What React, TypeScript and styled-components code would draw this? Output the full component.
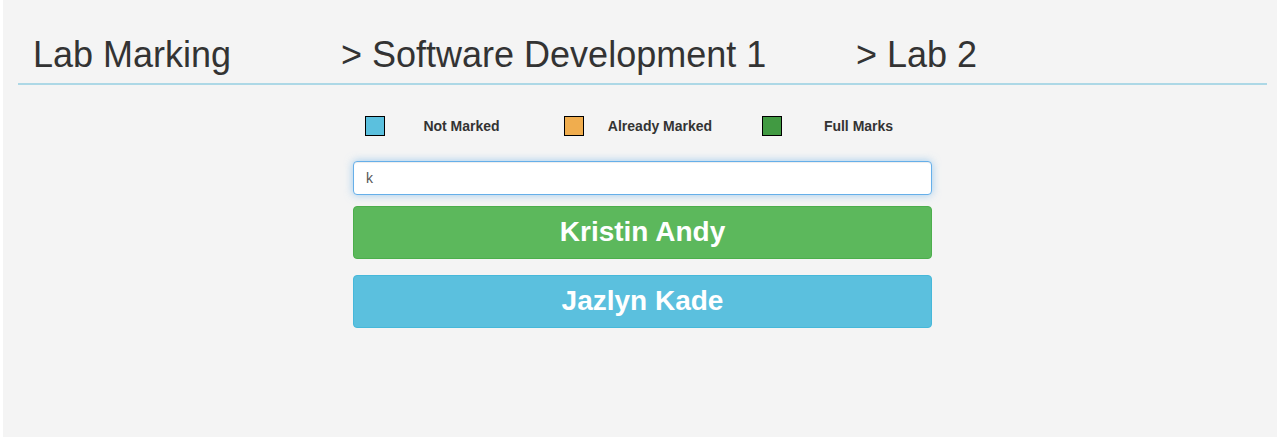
import styled, { createGlobalStyle } from "styled-components";

const GlobalStyle = createGlobalStyle`
  html, body {
    margin: 0;
    padding: 0;
    background: #ffffff;
  }
  body {
    font-family: "Liberation Sans", Arial, Helvetica, sans-serif;
    color: #333333;
  }
`;

const Page = styled.div`
  margin-left: 3px;
  min-height: 437px;
  background-color: #f4f4f4;
  display: flex;
  flex-direction: column;
`;

const Header = styled.div`
  margin: 0 10px 0 15px;
  padding: 35px 0 8px 15px;
  border-bottom: 2px solid #add8e6;
  display: grid;
  grid-template-columns: 308px 515px auto;

  > h1 {
    margin: 0;
    font-size: 36px;
    font-weight: 400;
    line-height: 40px;
    color: #333333;
  }
`;

const Main = styled.div`
  margin-left: 350px;
  width: 579px;
  display: flex;
  flex-direction: column;
`;

const Legend = styled.div`
  margin-top: 31px;
  display: grid;
  grid-template-columns: repeat(3, 198.5px);
  width: 595.5px;
`;

const LegendItem = styled.div`
  display: flex;
  align-items: center;
  padding-left: 12px;
  height: 20px;
`;

const Swatch = styled.span<{ $color: string }>`
  width: 20px;
  height: 20px;
  box-sizing: border-box;
  border: 1px solid #000000;
  background-color: ${(p) => p.$color};
`;

const LegendLabel = styled.span`
  width: 153px;
  text-align: center;
  font-size: 14px;
  font-weight: 700;
  color: #333333;
`;

const Search = styled.input`
  margin-top: 25px;
  height: 34px;
  box-sizing: border-box;
  padding: 6px 12px;
  font-family: "Liberation Sans", Arial, sans-serif;
  font-size: 14px;
  color: #555555;
  background: #ffffff;
  border: 1px solid #66afe9;
  border-radius: 4px;
  outline: none;
  box-shadow: inset 0 1px 1px rgba(0, 0, 0, 0.075),
    0 0 8px rgba(102, 175, 233, 0.6);
`;

const List = styled.div`
  margin-top: 11px;
  display: flex;
  flex-direction: column;
  gap: 16px;
`;

const StudentButton = styled.button<{ $kind: "success" | "info" }>`
  height: 53px;
  box-sizing: border-box;
  border-radius: 4px;
  border: 1px solid
    ${(p) => (p.$kind === "success" ? "#4cae4c" : "#46b8da")};
  background-color: ${(p) => (p.$kind === "success" ? "#5cb85c" : "#5bc0de")};
  color: #ffffff;
  font-family: "Liberation Sans", Arial, sans-serif;
  font-size: 28px;
  font-weight: 700;
  line-height: 1;
  padding: 0 0 2px;
  cursor: pointer;
`;

const legend = [
  { label: "Not Marked", color: "#5bc0de" },
  { label: "Already Marked", color: "#f0ad4e" },
  { label: "Full Marks", color: "#419a42" },
];

const students: { name: string; kind: "success" | "info" }[] = [
  { name: "Kristin Andy", kind: "success" },
  { name: "Jazlyn Kade", kind: "info" },
];

export default function App() {
  return (
    <>
      <GlobalStyle />
      <Page>
        <Header>
          <h1>Lab Marking</h1>
          <h1>&gt; Software Development 1</h1>
          <h1>&gt; Lab 2</h1>
        </Header>
        <Main>
          <Legend>
            {legend.map((l) => (
              <LegendItem key={l.label}>
                <Swatch $color={l.color} />
                <LegendLabel>{l.label}</LegendLabel>
              </LegendItem>
            ))}
          </Legend>
          <Search defaultValue="k" />
          <List>
            {students.map((s) => (
              <StudentButton key={s.name} $kind={s.kind}>
                {s.name}
              </StudentButton>
            ))}
          </List>
        </Main>
      </Page>
    </>
  );
}
